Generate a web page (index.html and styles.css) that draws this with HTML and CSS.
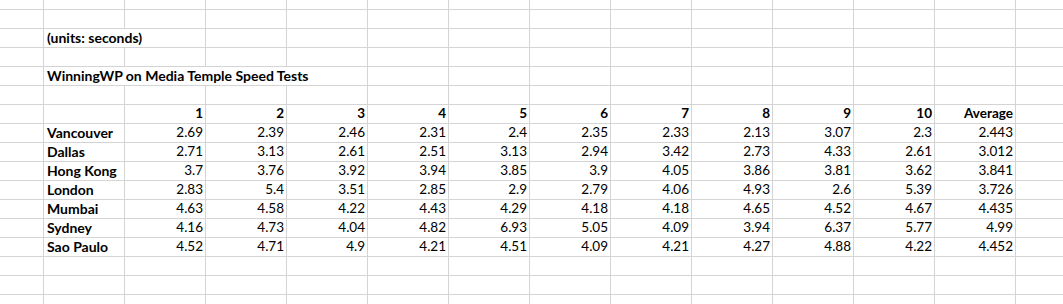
FILE: index.html
```html
<!DOCTYPE html>
<html>
<head>
<meta charset="utf-8">
<link rel="stylesheet" href="styles.css">
</head>
<body>
<div class="sheet">
  <div class="row top"><div class="c first"></div><div class="c"></div><div class="c"></div><div class="c"></div><div class="c"></div><div class="c"></div><div class="c"></div><div class="c"></div><div class="c"></div><div class="c"></div><div class="c"></div><div class="c"></div><div class="c"></div><div class="c last"></div></div>
  <div class="row"><div class="c first"></div><div class="c"></div><div class="c"></div><div class="c"></div><div class="c"></div><div class="c"></div><div class="c"></div><div class="c"></div><div class="c"></div><div class="c"></div><div class="c"></div><div class="c"></div><div class="c"></div><div class="c last"></div></div>
  <div class="row"><div class="c first"></div><div class="c span2 label">(units: seconds)</div><div class="c"></div><div class="c"></div><div class="c"></div><div class="c"></div><div class="c"></div><div class="c"></div><div class="c"></div><div class="c"></div><div class="c"></div><div class="c"></div><div class="c last"></div></div>
  <div class="row"><div class="c first"></div><div class="c"></div><div class="c"></div><div class="c"></div><div class="c"></div><div class="c"></div><div class="c"></div><div class="c"></div><div class="c"></div><div class="c"></div><div class="c"></div><div class="c"></div><div class="c"></div><div class="c last"></div></div>
  <div class="row"><div class="c first"></div><div class="c span4 label">WinningWP on Media Temple Speed Tests</div><div class="c"></div><div class="c"></div><div class="c"></div><div class="c"></div><div class="c"></div><div class="c"></div><div class="c"></div><div class="c"></div><div class="c last"></div></div>
  <div class="row"><div class="c first"></div><div class="c"></div><div class="c"></div><div class="c"></div><div class="c"></div><div class="c"></div><div class="c"></div><div class="c"></div><div class="c"></div><div class="c"></div><div class="c"></div><div class="c"></div><div class="c"></div><div class="c last"></div></div>
  <div class="row"><div class="c first"></div><div class="c"></div><div class="c num b">1</div><div class="c num b">2</div><div class="c num b">3</div><div class="c num b">4</div><div class="c num b">5</div><div class="c num b">6</div><div class="c num b">7</div><div class="c num b">8</div><div class="c num b">9</div><div class="c num b">10</div><div class="c num b">Average</div><div class="c last"></div></div>
  <div class="row"><div class="c first"></div><div class="c label">Vancouver</div><div class="c num">2.69</div><div class="c num">2.39</div><div class="c num">2.46</div><div class="c num">2.31</div><div class="c num">2.4</div><div class="c num">2.35</div><div class="c num">2.33</div><div class="c num">2.13</div><div class="c num">3.07</div><div class="c num">2.3</div><div class="c num">2.443</div><div class="c last"></div></div>
  <div class="row"><div class="c first"></div><div class="c label">Dallas</div><div class="c num">2.71</div><div class="c num">3.13</div><div class="c num">2.61</div><div class="c num">2.51</div><div class="c num">3.13</div><div class="c num">2.94</div><div class="c num">3.42</div><div class="c num">2.73</div><div class="c num">4.33</div><div class="c num">2.61</div><div class="c num">3.012</div><div class="c last"></div></div>
  <div class="row"><div class="c first"></div><div class="c label">Hong Kong</div><div class="c num">3.7</div><div class="c num">3.76</div><div class="c num">3.92</div><div class="c num">3.94</div><div class="c num">3.85</div><div class="c num">3.9</div><div class="c num">4.05</div><div class="c num">3.86</div><div class="c num">3.81</div><div class="c num">3.62</div><div class="c num">3.841</div><div class="c last"></div></div>
  <div class="row"><div class="c first"></div><div class="c label">London</div><div class="c num">2.83</div><div class="c num">5.4</div><div class="c num">3.51</div><div class="c num">2.85</div><div class="c num">2.9</div><div class="c num">2.79</div><div class="c num">4.06</div><div class="c num">4.93</div><div class="c num">2.6</div><div class="c num">5.39</div><div class="c num">3.726</div><div class="c last"></div></div>
  <div class="row"><div class="c first"></div><div class="c label">Mumbai</div><div class="c num">4.63</div><div class="c num">4.58</div><div class="c num">4.22</div><div class="c num">4.43</div><div class="c num">4.29</div><div class="c num">4.18</div><div class="c num">4.18</div><div class="c num">4.65</div><div class="c num">4.52</div><div class="c num">4.67</div><div class="c num">4.435</div><div class="c last"></div></div>
  <div class="row"><div class="c first"></div><div class="c label">Sydney</div><div class="c num">4.16</div><div class="c num">4.73</div><div class="c num">4.04</div><div class="c num">4.82</div><div class="c num">6.93</div><div class="c num">5.05</div><div class="c num">4.09</div><div class="c num">3.94</div><div class="c num">6.37</div><div class="c num">5.77</div><div class="c num">4.99</div><div class="c last"></div></div>
  <div class="row"><div class="c first"></div><div class="c label">Sao Paulo</div><div class="c num">4.52</div><div class="c num">4.71</div><div class="c num">4.9</div><div class="c num">4.21</div><div class="c num">4.51</div><div class="c num">4.09</div><div class="c num">4.21</div><div class="c num">4.27</div><div class="c num">4.88</div><div class="c num">4.22</div><div class="c num">4.452</div><div class="c last"></div></div>
  <div class="row"><div class="c first"></div><div class="c"></div><div class="c"></div><div class="c"></div><div class="c"></div><div class="c"></div><div class="c"></div><div class="c"></div><div class="c"></div><div class="c"></div><div class="c"></div><div class="c"></div><div class="c"></div><div class="c last"></div></div>
  <div class="row"><div class="c first"></div><div class="c"></div><div class="c"></div><div class="c"></div><div class="c"></div><div class="c"></div><div class="c"></div><div class="c"></div><div class="c"></div><div class="c"></div><div class="c"></div><div class="c"></div><div class="c"></div><div class="c last"></div></div>
  <div class="row"><div class="c first"></div><div class="c"></div><div class="c"></div><div class="c"></div><div class="c"></div><div class="c"></div><div class="c"></div><div class="c"></div><div class="c"></div><div class="c"></div><div class="c"></div><div class="c"></div><div class="c"></div><div class="c last"></div></div>
</div>
</body>
</html>
```

FILE: styles.css
```css
html, body {
  margin: 0;
  padding: 0;
  background: #ffffff;
  overflow: hidden;
}

.sheet {
  width: 1063px;
  height: 304px;
  overflow: hidden;
  font-family: Lato, "Liberation Sans", sans-serif;
  font-size: 13.5px;
  color: #000000;
}

.row {
  display: flex;
  height: 19px;
}

.row.top {
  height: 10px;
}

.c {
  flex: 0 0 81px;
  width: 81px;
  box-sizing: border-box;
  border-right: 1px solid #d4d4d4;
  border-bottom: 1px solid #d4d4d4;
  display: flex;
  align-items: flex-end;
  padding: 0 2px 3px 3px;
  line-height: 13px;
  white-space: nowrap;
}

.c.first {
  flex-basis: 44px;
  width: 44px;
}

.c.last {
  flex-basis: 60px;
  width: 60px;
}

.c.span2 {
  flex-basis: 162px;
  width: 162px;
}

.c.span4 {
  flex-basis: 324px;
  width: 324px;
}

.label {
  font-weight: 700;
  font-size: 14px;
  justify-content: flex-start;
}

.num {
  justify-content: flex-end;
}

.b {
  font-weight: 700;
}
```
